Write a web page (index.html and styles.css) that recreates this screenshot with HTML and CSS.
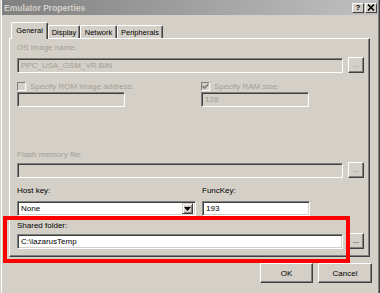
FILE: index.html
```html
<!DOCTYPE html>
<html lang="en">
<head>
  <meta charset="UTF-8">
  <title>Emulator Properties</title>
  <link rel="stylesheet" href="styles.css">
</head>
<body>
  <div class="window">
    <div class="titlebar">
      <span class="title">Emulator Properties</span>
      <div class="caption-btns">
        <span class="cbtn">?</span>
        <span class="cbtn">
          <svg width="8" height="7" viewBox="0 0 8 7"><path d="M1 0.5 L7 6.5 M7 0.5 L1 6.5" stroke="#000" stroke-width="1.6"/></svg>
        </span>
      </div>
    </div>

    <div class="tabs">
      <span class="tab active tab-general">General</span>
      <span class="tab tab-display">Display</span>
      <span class="tab tab-network">Network</span>
      <span class="tab tab-periph">Peripherals</span>
    </div>

    <div class="panel">
      <label class="lbl disabled lbl-first">OS image name:</label>
      <div class="field-row">
        <div class="input disabled wide">PPC_USA_GSM_VR.BIN</div>
        <span class="browse dim">...</span>
      </div>

      <div class="two-col">
        <div class="col">
          <label class="check disabled"><span class="box"></span>Specify ROM image address:</label>
          <div class="input disabled short"></div>
        </div>
        <div class="col">
          <label class="check disabled"><span class="box checked">
            <svg width="7" height="7" viewBox="0 0 7 7"><path d="M0.5 3 L2.5 5 L6.5 1" stroke="#808080" stroke-width="1.6" fill="none"/></svg>
          </span>Specify RAM size:</label>
          <div class="input disabled short">128</div>
        </div>
      </div>

      <label class="lbl disabled lbl-flash">Flash memory file:</label>
      <div class="field-row row-tight">
        <div class="input disabled wide"></div>
        <span class="browse dim">...</span>
      </div>

      <div class="two-col keys">
        <div class="col">
          <label class="lbl">Host key:</label>
          <div class="select">
            <span class="select-val">None</span>
            <span class="select-btn">
              <svg width="7" height="4" viewBox="0 0 7 4"><path d="M0 0 H7 L3.5 4 Z" fill="#000"/></svg>
            </span>
          </div>
        </div>
        <div class="col">
          <label class="lbl">FuncKey:</label>
          <div class="input short enabled">193</div>
        </div>
      </div>

      <label class="lbl lbl-shared">Shared folder:</label>
      <div class="field-row row-tight">
        <div class="input enabled wide">C:\lazarusTemp</div>
        <span class="browse">...</span>
      </div>
    </div>

    <div class="actions">
      <span class="btn ok">OK</span>
      <span class="btn cancel">Cancel</span>
    </div>

    <div class="highlight"></div>
  </div>
</body>
</html>
```

FILE: styles.css
```css
body {
  margin: 0;
  background-color: #d4d0c8;
}
.window {
  position: relative;
  width: 380px;
  height: 293px;
  box-sizing: border-box;
  background-color: #d4d0c8;
  box-shadow: inset 1px 0 #d4d0c8, inset 2px 0 #fff, inset -1px 0 #404040, inset -2px 0 #808080;
  font-family: "Liberation Sans", Arial, sans-serif;
  font-size: 8px;
  color: #000;
  overflow: hidden;
}
.titlebar {
  height: 15px;
  margin: 0 2px 0 2px;
  display: flex;
  align-items: center;
  justify-content: space-between;
  background: linear-gradient(to right, #808080, #c0c0c0);
}
.title {
  margin-left: 2px;
  font-weight: bold;
  font-size: 8.5px;
  color: #d4d0c8;
}
.caption-btns {
  display: flex;
  gap: 1px;
  margin-right: 1px;
}
.cbtn {
  width: 12px;
  height: 10px;
  box-sizing: border-box;
  display: flex;
  align-items: center;
  justify-content: center;
  background-color: #d4d0c8;
  border-top: 1px solid #fff;
  border-left: 1px solid #fff;
  border-right: 1px solid #404040;
  border-bottom: 1px solid #404040;
  font-weight: bold;
  font-size: 8px;
  line-height: 1;
}
.tabs {
  display: flex;
  align-items: flex-end;
  height: 16px;
  margin: 7px 0 0 11px;
  position: relative;
  z-index: 1;
}
.tab {
  height: 13px;
  box-sizing: border-box;
  padding-top: 1px;
  text-align: center;
  font-size: 7.5px;
  border-top: 1px solid #fff;
  border-left: 1px solid #fff;
  border-right: 1px solid #404040;
  box-shadow: inset -1px 0 #808080;
  border-radius: 2px 2px 0 0;
  line-height: 11px;
  background-color: #d4d0c8;
  white-space: nowrap;
}
.tab.active {
  height: 17px;
  margin-bottom: -1px;
  padding-top: 2px;
}
.tab-general {
  width: 37px;
}
.tab-display {
  width: 32px;
}
.tab-network {
  width: 37px;
}
.tab-periph {
  width: 46px;
}
.panel {
  margin-left: 9px;
  width: 361px;
  height: 219px;
  box-sizing: border-box;
  padding: 0 0 0 7px;
  border-top: 1px solid #fff;
  border-left: 1px solid #fff;
  border-right: 1px solid #404040;
  border-bottom: 1px solid #404040;
  box-shadow: inset -1px -1px #808080;
}
.lbl {
  display: block;
  height: 12px;
  line-height: 12px;
}
.disabled {
  color: #a29e96;
}
.lbl-first {
  margin-top: 3px;
}
.lbl-flash {
  margin-top: 42px;
}
.lbl-shared {
  margin-top: 4px;
}
.field-row {
  display: flex;
  align-items: center;
  gap: 5px;
  height: 16px;
  margin-top: 3px;
}
.row-tight {
  margin-top: 1px;
}
.input {
  height: 15px;
  box-sizing: border-box;
  border-top: 1px solid #808080;
  border-left: 1px solid #808080;
  border-right: 1px solid #fff;
  border-bottom: 1px solid #fff;
  box-shadow: inset 1px 1px #404040, inset -1px -1px #d4d0c8;
  padding: 0 3px;
  line-height: 13px;
  background-color: #d4d0c8;
  white-space: nowrap;
}
.input.enabled {
  background-color: #fff;
  color: #000;
}
.wide {
  width: 326px;
}
.short {
  width: 108px;
}
.browse {
  width: 16px;
  height: 16px;
  box-sizing: border-box;
  display: flex;
  align-items: center;
  justify-content: center;
  border-top: 1px solid #fff;
  border-left: 1px solid #fff;
  border-right: 1px solid #404040;
  border-bottom: 1px solid #404040;
  box-shadow: inset -1px -1px #808080;
  line-height: 1;
}
.browse.dim {
  color: #8c8880;
}
.two-col {
  display: grid;
  grid-template-columns: 184px 1fr;
  margin-top: 7px;
}
.check {
  display: flex;
  align-items: center;
  gap: 4px;
  height: 12px;
}
.box {
  width: 9px;
  height: 9px;
  box-sizing: border-box;
  display: flex;
  align-items: center;
  justify-content: center;
  border-top: 1px solid #808080;
  border-left: 1px solid #808080;
  border-right: 1px solid #fff;
  border-bottom: 1px solid #fff;
  background-color: #d4d0c8;
}
.keys {
  margin-top: 7px;
}
.keys .lbl {
  margin-bottom: 4px;
}
.keys .col:last-child {
  padding-left: 1px;
}
.select {
  width: 179px;
  height: 15px;
  box-sizing: border-box;
  display: flex;
  align-items: center;
  justify-content: space-between;
  border-top: 1px solid #808080;
  border-left: 1px solid #808080;
  border-right: 1px solid #fff;
  border-bottom: 1px solid #fff;
  box-shadow: inset 1px 1px #404040, inset -1px -1px #d4d0c8;
  background-color: #fff;
  padding: 2px 2px 2px 3px;
}
.select-btn {
  width: 11px;
  height: 11px;
  box-sizing: border-box;
  display: flex;
  align-items: center;
  justify-content: center;
  background-color: #d4d0c8;
  border-top: 1px solid #d4d0c8;
  border-left: 1px solid #d4d0c8;
  border-right: 1px solid #404040;
  border-bottom: 1px solid #404040;
  box-shadow: inset 1px 1px #fff, inset -1px -1px #808080;
}
.actions {
  display: flex;
  justify-content: flex-end;
  gap: 5px;
  margin: 6px 8px 0 0;
}
.btn {
  height: 20px;
  box-sizing: border-box;
  display: flex;
  align-items: center;
  justify-content: center;
  border-top: 1px solid #fff;
  border-left: 1px solid #fff;
  border-right: 1px solid #404040;
  border-bottom: 1px solid #404040;
  box-shadow: inset -1px -1px #808080;
}
.ok {
  width: 53px;
}
.cancel {
  width: 54px;
}
/* red annotation frame drawn over the dialog */
.highlight {
  position: absolute;
  left: 3px;
  top: 216px;
  width: 347px;
  height: 47px;
  box-sizing: border-box;
  border: 4px solid #f00;
}
```
